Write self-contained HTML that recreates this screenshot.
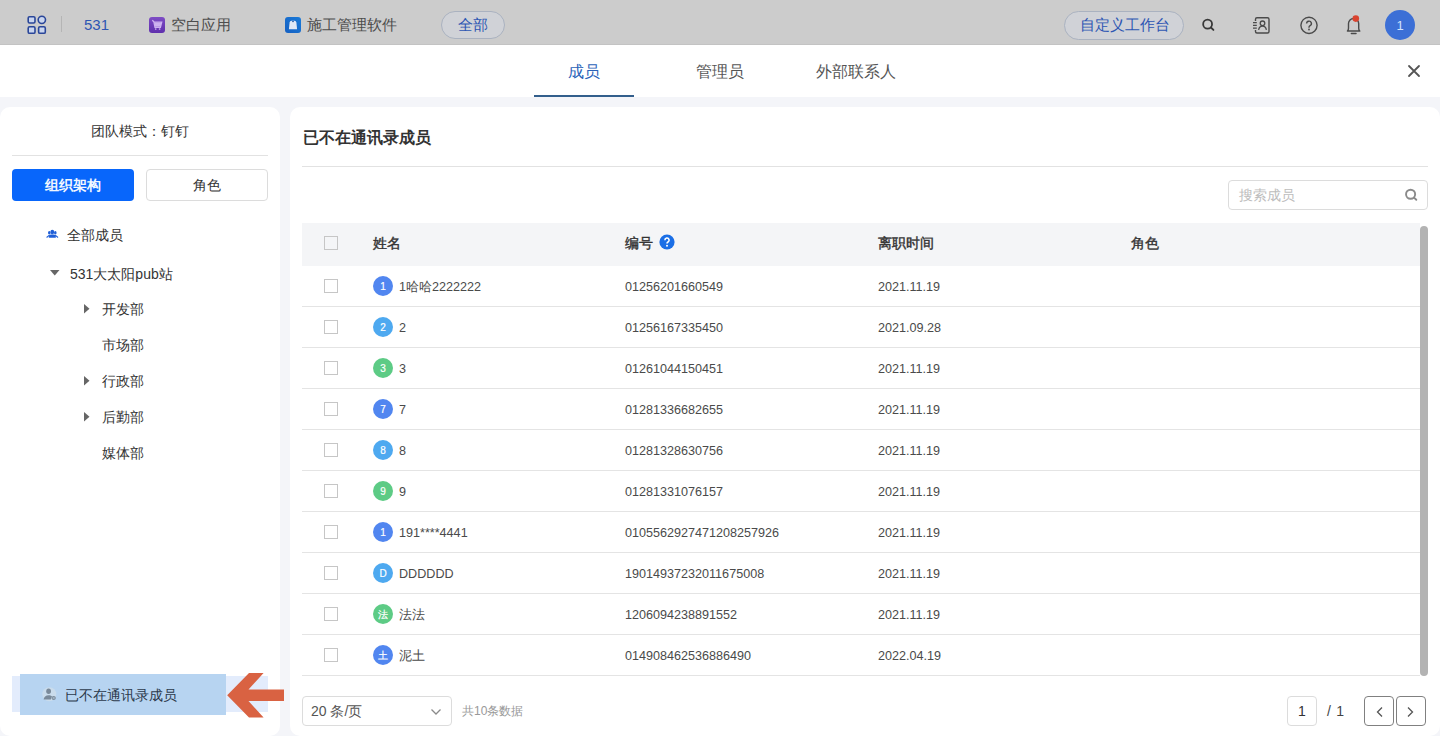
<!DOCTYPE html>
<html><head><meta charset="utf-8">
<style>
*{box-sizing:border-box;margin:0;padding:0}
html,body{width:1440px;height:736px;overflow:hidden;background:#fff;font-family:"Liberation Sans",sans-serif;color:#333}
.a{position:absolute;white-space:nowrap}
#top{position:absolute;left:0;top:0;width:1440px;height:45px;background:#cccccc;border-bottom:1px solid #c3c3c3}
#hdr{position:absolute;left:0;top:45px;width:1440px;height:52px;background:#fff}
#bg{position:absolute;left:0;top:97px;width:1440px;height:639px;background:#f4f5f9}
#lp{position:absolute;left:0;top:107px;width:280px;height:629px;background:#fff;border-radius:10px}
#rp{position:absolute;left:290px;top:107px;width:1150px;height:629px;background:#fff;border-radius:10px}
.tab{font-size:16px;color:#555;line-height:20px}
.cb{position:absolute;width:14px;height:14px;border:1px solid #c6c6c6;background:transparent}
.th{font-size:14px;font-weight:normal;-webkit-text-stroke:0.4px #333;color:#333;line-height:20px}
.row{position:absolute;left:302px;width:1118px;height:41px;border-bottom:1px solid #e4e4e4}
.av{position:absolute;width:20px;height:20px;border-radius:50%;color:#fff;font-size:10px;text-align:center;line-height:22px;-webkit-text-stroke:0.2px #fff}
.td{font-size:12.6px;color:#4a4a4a;line-height:20px}
.tree{font-size:14px;color:#333;line-height:20px}
</style></head><body>
<div id="top">
  <!-- grid icon -->
  <svg class="a" style="left:20px;top:10px" width="32" height="30" viewBox="20 10 32 30">
    <g fill="#c9d5ee" stroke="#2a4699" stroke-width="1.6">
      <rect x="28.2" y="16.7" width="6.8" height="6.3" rx="1.4"/>
      <circle cx="41.85" cy="19.85" r="3.65"/>
      <rect x="28.2" y="26.8" width="6.8" height="6.5" rx="1.4"/>
      <rect x="38.6" y="26.8" width="6.7" height="6.5" rx="1.4"/>
    </g>
  </svg>
  <div class="a" style="left:61px;top:16px;width:1px;height:16px;background:#b5b5b5"></div>
  <div class="a" style="left:84px;top:15px;font-size:15px;line-height:20px;color:#2d56b3">531</div>
  <svg class="a" style="left:149px;top:17px" width="16" height="16" viewBox="0 0 16 16">
    <defs><linearGradient id="pg" x1="0" y1="0" x2="0" y2="1"><stop offset="0" stop-color="#7d4cc4"/><stop offset="1" stop-color="#5f2fad"/></linearGradient></defs>
    <rect width="16" height="16" rx="3" fill="url(#pg)"/>
    <path d="M3.3 3.2l1.6 1.6 1.1 5.6h5.4l1.3-5.2H5" fill="none" stroke="#cdb2f0" stroke-width="1.3"/>
    <path d="M5.4 5.4h7.2l-1.1 4.4H6.2z" fill="#cdb2f0"/>
    <circle cx="6.7" cy="12" r="0.85" fill="#cdb2f0"/><circle cx="10.6" cy="12" r="0.85" fill="#cdb2f0"/>
  </svg>
  <div class="a" style="left:171px;top:15px;font-size:15px;line-height:20px;color:#4d4d4d">空白应用</div>
  <svg class="a" style="left:285px;top:17px" width="16" height="16" viewBox="0 0 16 16">
    <defs><linearGradient id="bg2" x1="1" y1="0" x2="0" y2="1"><stop offset="0" stop-color="#1a7ad8"/><stop offset="1" stop-color="#1560c2"/></linearGradient></defs>
    <rect width="16" height="16" rx="3" fill="url(#bg2)"/>
    <path d="M3.9 12.3L4.6 5.6Q4.9 3.8 6.4 3.7H9.6Q11.1 3.8 11.4 5.6L12.1 12.3z" fill="#dfe8f6"/>
    <path d="M7 4.6h2" stroke="#2a5aa0" stroke-width="0.9"/>
  </svg>
  <div class="a" style="left:307px;top:15px;font-size:15px;line-height:20px;color:#4d4d4d">施工管理软件</div>
  <div class="a" style="left:441px;top:11px;width:64px;height:28px;border:1px solid #aab2c0;border-radius:14px;background:#d0d2d7"></div>
  <div class="a" style="left:458px;top:15px;font-size:15px;line-height:20px;color:#2d56b3">全部</div>

  <div class="a" style="left:1064px;top:11px;width:120px;height:29px;border:1px solid #aab2c0;border-radius:15px;background:#d0d2d7"></div>
  <div class="a" style="left:1080px;top:15px;font-size:15px;line-height:20px;color:#2d56b3">自定义工作台</div>
  <svg class="a" style="left:1195px;top:14px" width="26" height="22" viewBox="1195 14 26 22">
    <circle cx="1207.6" cy="24.15" r="4.45" fill="none" stroke="#383838" stroke-width="1.8"/>
    <path d="M1210.9 27.5l2.5 2.4" stroke="#383838" stroke-width="1.9" stroke-linecap="round"/>
  </svg>
  <svg class="a" style="left:1245px;top:10px" width="40" height="30" viewBox="1245 10 40 30">
    <path d="M1255.5 21V19.3a1.5 1.5 0 0 1 1.5-1.5H1267.5a1.5 1.5 0 0 1 1.5 1.5V31.5a1.5 1.5 0 0 1-1.5 1.5H1257a1.5 1.5 0 0 1-1.5-1.5V30" fill="none" stroke="#4a4a4a" stroke-width="1.4"/>
    <path d="M1253 22.7h3.8M1253 25.4h3.8M1253 28.2h3.8" stroke="#4a4a4a" stroke-width="1.2"/>
    <circle cx="1262.5" cy="23.3" r="2.3" fill="none" stroke="#4a4a4a" stroke-width="1.3"/>
    <path d="M1258.6 29.8c.5-2.3 2-3.6 3.9-3.6s3.4 1.3 3.9 3.6" fill="none" stroke="#4a4a4a" stroke-width="1.3"/>
  </svg>
  <svg class="a" style="left:1290px;top:8px" width="40" height="32" viewBox="1290 8 40 32">
    <circle cx="1309" cy="25.35" r="8.1" fill="none" stroke="#4a4a4a" stroke-width="1.4"/>
    <path d="M1306.6 23.6a2.4 2.4 0 1 1 3.5 2.1c-.7.4-1.1.8-1.1 1.6v.4" fill="none" stroke="#4a4a4a" stroke-width="1.4"/>
    <circle cx="1309" cy="29.5" r="0.9" fill="#4a4a4a"/>
  </svg>
  <svg class="a" style="left:1340px;top:10px" width="30" height="30" viewBox="1340 10 30 30">
    <path d="M1347.4 31c.9-.7 1.1-1.6 1.1-2.8V23.6a5.1 5.1 0 0 1 10.2 0v4.6c0 1.2.2 2.1 1.1 2.8z" fill="none" stroke="#4a4a4a" stroke-width="1.4" stroke-linejoin="round"/>
    <path d="M1351.4 33.4h4.6" stroke="#4a4a4a" stroke-width="1.5" stroke-linecap="round"/>
    <circle cx="1355.8" cy="18.6" r="3.3" fill="#d9432f"/>
  </svg>
  <div class="a" style="left:1385px;top:10px;width:30px;height:30px;border-radius:50%;background:#3c6fd6;color:#d2e2fb;font-size:13px;line-height:31px;text-align:center">1</div>
</div>

<div id="hdr">
  <div class="a tab" style="left:568px;top:17px;color:#2a62b8">成员</div>
  <div class="a" style="left:534px;top:50px;width:100px;height:2px;background:#335f8c"></div>
  <div class="a tab" style="left:696px;top:17px">管理员</div>
  <div class="a tab" style="left:816px;top:17px">外部联系人</div>
  <svg class="a" style="left:1406px;top:17.6px" width="16" height="16" viewBox="0 0 16 16">
    <path d="M3 3l10 10M13 3L3 13" stroke="#555" stroke-width="1.8" stroke-linecap="round"/>
  </svg>
</div>

<div id="bg"></div>
<div id="lp"></div>
<div id="rp"></div>

<!-- left panel content -->
<div class="a" style="left:91px;top:121px;font-size:14px;line-height:20px;color:#333">团队模式：钉钉</div>
<div class="a" style="left:12px;top:155px;width:256px;height:1px;background:#e2e2e2"></div>
<div class="a" style="left:12px;top:169px;width:122px;height:32px;background:#0866fb;border-radius:4px;color:#f2f7ff;font-size:14px;line-height:33px;text-align:center;font-weight:bold">组织架构</div>
<div class="a" style="left:146px;top:169px;width:122px;height:32px;background:#fff;border:1px solid #dcdcdc;border-radius:4px;color:#333;font-size:14px;line-height:30px;text-align:center">角色</div>

<svg class="a" style="left:40px;top:222px" width="26" height="22" viewBox="40 222 26 22">
  <g fill="#1f5fd8">
  <ellipse cx="52.3" cy="232" rx="1.9" ry="2.2"/>
  <ellipse cx="49.3" cy="232.7" rx="1.3" ry="1.8"/>
  <ellipse cx="55.3" cy="232.7" rx="1.3" ry="1.8"/>
  <path d="M48.8 237.7v-1.3c0-1.2 1-2 2.2-2h2.6c1.2 0 2.2.8 2.2 2v1.3z"/>
  </g>
  <path d="M46.9 237.2l2.2-1.8M57.7 237.2l-2.2-1.8" stroke="#1f5fd8" stroke-width="1.1" stroke-linecap="round"/>
</svg>
<div class="a tree" style="left:67px;top:225px">全部成员</div>
<svg class="a" style="left:50px;top:270px" width="10" height="6" viewBox="0 0 10 6"><path d="M0 0h9.5L4.75 5.5z" fill="#666"/></svg>
<div class="a tree" style="left:70px;top:264px">531大太阳pub站</div>
<svg class="a" style="left:84px;top:304px" width="6" height="10" viewBox="0 0 6 10"><path d="M0 0v9.5L5.5 4.75z" fill="#666"/></svg>
<div class="a tree" style="left:102px;top:299px">开发部</div>
<div class="a tree" style="left:102px;top:335px">市场部</div>
<svg class="a" style="left:84px;top:376px" width="6" height="10" viewBox="0 0 6 10"><path d="M0 0v9.5L5.5 4.75z" fill="#666"/></svg>
<div class="a tree" style="left:102px;top:371px">行政部</div>
<svg class="a" style="left:84px;top:412px" width="6" height="10" viewBox="0 0 6 10"><path d="M0 0v9.5L5.5 4.75z" fill="#666"/></svg>
<div class="a tree" style="left:102px;top:407px">后勤部</div>
<div class="a tree" style="left:102px;top:443px">媒体部</div>

<!-- highlight -->
<div class="a" style="left:12px;top:676px;width:256px;height:36px;background:#e3ecfc"></div>
<div class="a" style="left:20px;top:674px;width:206px;height:41px;background:#b7d4f1"></div>
<svg class="a" style="left:40px;top:685px" width="18" height="18" viewBox="40 685 18 18">
  <circle cx="49.3" cy="694.3" r="7" fill="#cadcec"/>
  <ellipse cx="48.6" cy="691.3" rx="2.4" ry="2.7" fill="#7a8a9a"/>
  <path d="M43.6 699.5c.3-2.6 2.2-4.3 5-4.3 1.4 0 2.6.4 3.4 1.1l-1.2 3.2z" fill="#7a8a9a"/>
  <circle cx="53.7" cy="698" r="2.1" fill="#7a8a9a"/><path d="M52.7 698h2" stroke="#cadcec" stroke-width="0.9"/>
</svg>
<div class="a tree" style="left:65px;top:685px;color:#2c3a4c">已不在通讯录成员</div>
<svg class="a" style="left:220px;top:665px" width="70" height="60" viewBox="220 665 70 60">
  <path d="M227.2 695.3L249 673.1h14.6l-15.1 16.3H284v11.5h-35.5l15.1 16.7H249z" fill="#d96242"/>
</svg>

<!-- right panel content -->
<div class="a" style="left:303px;top:128px;font-size:16px;font-weight:bold;line-height:20px;color:#333">已不在通讯录成员</div>
<div class="a" style="left:302px;top:166px;width:1126px;height:1px;background:#e2e2e2"></div>
<div class="a" style="left:1228px;top:180px;width:200px;height:30px;border:1px solid #dcdcdc;border-radius:4px;background:#fff"></div>
<div class="a" style="left:1239px;top:185px;font-size:14px;line-height:20px;color:#bdbdbd">搜索成员</div>
<svg class="a" style="left:1398px;top:184px" width="26" height="22" viewBox="1398 184 26 22">
  <circle cx="1410.6" cy="194.25" r="4.55" fill="none" stroke="#8a8a8a" stroke-width="1.9"/>
  <path d="M1414 197.6l2.3 2.2" stroke="#8a8a8a" stroke-width="1.9" stroke-linecap="round"/>
</svg>

<div class="a" style="left:302px;top:223px;width:1118px;height:43px;background:#f4f5f7"></div>
<div class="cb" style="left:324px;top:236px"></div>
<div class="a th" style="left:373px;top:233px">姓名</div>
<div class="a th" style="left:625px;top:233px">编号</div>
<svg class="a" style="left:659px;top:234px" width="16" height="16" viewBox="0 0 16 16">
  <circle cx="8" cy="8" r="7.6" fill="#1a6ee6"/>
  <path d="M5.9 6.2a2.1 2.1 0 1 1 3.1 1.8c-.7.4-1 .8-1 1.6" fill="none" stroke="#fff" stroke-width="1.6"/>
  <circle cx="8" cy="11.8" r="1" fill="#fff"/>
</svg>
<div class="a th" style="left:878px;top:233px">离职时间</div>
<div class="a th" style="left:1131px;top:233px">角色</div>
<div class="a" style="left:1420px;top:226px;width:8px;height:450px;border-radius:4px;background:#b3b3b3"></div>

<div id="rows">
<div class="row" style="top:266px"></div>
<div class="cb" style="left:324px;top:279px"></div>
<div class="av" style="left:373px;top:276px;background:#5186f0">1</div>
<div class="a td" style="left:399px;top:277px">1哈哈2222222</div>
<div class="a td" style="left:625px;top:277px">01256201660549</div>
<div class="a td" style="left:878px;top:277px">2021.11.19</div>
<div class="row" style="top:307px"></div>
<div class="cb" style="left:324px;top:320px"></div>
<div class="av" style="left:373px;top:317px;background:#4ea9f0">2</div>
<div class="a td" style="left:399px;top:318px">2</div>
<div class="a td" style="left:625px;top:318px">01256167335450</div>
<div class="a td" style="left:878px;top:318px">2021.09.28</div>
<div class="row" style="top:348px"></div>
<div class="cb" style="left:324px;top:361px"></div>
<div class="av" style="left:373px;top:358px;background:#5dcb85">3</div>
<div class="a td" style="left:399px;top:359px">3</div>
<div class="a td" style="left:625px;top:359px">01261044150451</div>
<div class="a td" style="left:878px;top:359px">2021.11.19</div>
<div class="row" style="top:389px"></div>
<div class="cb" style="left:324px;top:402px"></div>
<div class="av" style="left:373px;top:399px;background:#5186f0">7</div>
<div class="a td" style="left:399px;top:400px">7</div>
<div class="a td" style="left:625px;top:400px">01281336682655</div>
<div class="a td" style="left:878px;top:400px">2021.11.19</div>
<div class="row" style="top:430px"></div>
<div class="cb" style="left:324px;top:443px"></div>
<div class="av" style="left:373px;top:440px;background:#4ea9f0">8</div>
<div class="a td" style="left:399px;top:441px">8</div>
<div class="a td" style="left:625px;top:441px">01281328630756</div>
<div class="a td" style="left:878px;top:441px">2021.11.19</div>
<div class="row" style="top:471px"></div>
<div class="cb" style="left:324px;top:484px"></div>
<div class="av" style="left:373px;top:481px;background:#5dcb85">9</div>
<div class="a td" style="left:399px;top:482px">9</div>
<div class="a td" style="left:625px;top:482px">01281331076157</div>
<div class="a td" style="left:878px;top:482px">2021.11.19</div>
<div class="row" style="top:512px"></div>
<div class="cb" style="left:324px;top:525px"></div>
<div class="av" style="left:373px;top:522px;background:#5186f0">1</div>
<div class="a td" style="left:399px;top:523px">191****4441</div>
<div class="a td" style="left:625px;top:523px">0105562927471208257926</div>
<div class="a td" style="left:878px;top:523px">2021.11.19</div>
<div class="row" style="top:553px"></div>
<div class="cb" style="left:324px;top:566px"></div>
<div class="av" style="left:373px;top:563px;background:#4ea9f0">D</div>
<div class="a td" style="left:399px;top:564px">DDDDDD</div>
<div class="a td" style="left:625px;top:564px">19014937232011675008</div>
<div class="a td" style="left:878px;top:564px">2021.11.19</div>
<div class="row" style="top:594px"></div>
<div class="cb" style="left:324px;top:607px"></div>
<div class="av" style="left:373px;top:604px;background:#5dcb85">法</div>
<div class="a td" style="left:399px;top:605px">法法</div>
<div class="a td" style="left:625px;top:605px">1206094238891552</div>
<div class="a td" style="left:878px;top:605px">2021.11.19</div>
<div class="row" style="top:635px"></div>
<div class="cb" style="left:324px;top:648px"></div>
<div class="av" style="left:373px;top:645px;background:#5186f0">土</div>
<div class="a td" style="left:399px;top:646px">泥土</div>
<div class="a td" style="left:625px;top:646px">014908462536886490</div>
<div class="a td" style="left:878px;top:646px">2022.04.19</div>
</div>

<!-- pagination -->
<div class="a" style="left:302px;top:696px;width:150px;height:30px;border:1px solid #dcdcdc;border-radius:4px;background:#fff"></div>
<div class="a" style="left:311px;top:701px;font-size:14px;line-height:20px;color:#555">20 条/页</div>
<svg class="a" style="left:430px;top:708px" width="12" height="8" viewBox="0 0 12 8"><path d="M1.5 1.5l4.5 4.5 4.5-4.5" fill="none" stroke="#8a8a8a" stroke-width="1.3"/></svg>
<div class="a" style="left:462px;top:703px;font-size:12px;line-height:16px;color:#999">共10条数据</div>
<div class="a" style="left:1287px;top:696px;width:30px;height:30px;border:1px solid #dcdcdc;border-radius:4px;background:#fff;font-size:14px;line-height:28px;text-align:center;color:#333">1</div>
<div class="a" style="left:1327px;top:701px;font-size:14px;line-height:20px;color:#444;word-spacing:1.5px">/ 1</div>
<div class="a" style="left:1364px;top:696px;width:30px;height:30px;border:1px solid #808080;border-radius:4px;background:#fff"></div>
<svg class="a" style="left:1373.9px;top:705px" width="12" height="14" viewBox="0 0 12 14"><path d="M8 2.5L3.5 7 8 11.5" fill="none" stroke="#555" stroke-width="1.3"/></svg>
<div class="a" style="left:1396px;top:696px;width:30px;height:30px;border:1px solid #808080;border-radius:4px;background:#fff"></div>
<svg class="a" style="left:1404.3px;top:705px" width="12" height="14" viewBox="0 0 12 14"><path d="M4 2.5L8.5 7 4 11.5" fill="none" stroke="#555" stroke-width="1.3"/></svg>
</body></html>
